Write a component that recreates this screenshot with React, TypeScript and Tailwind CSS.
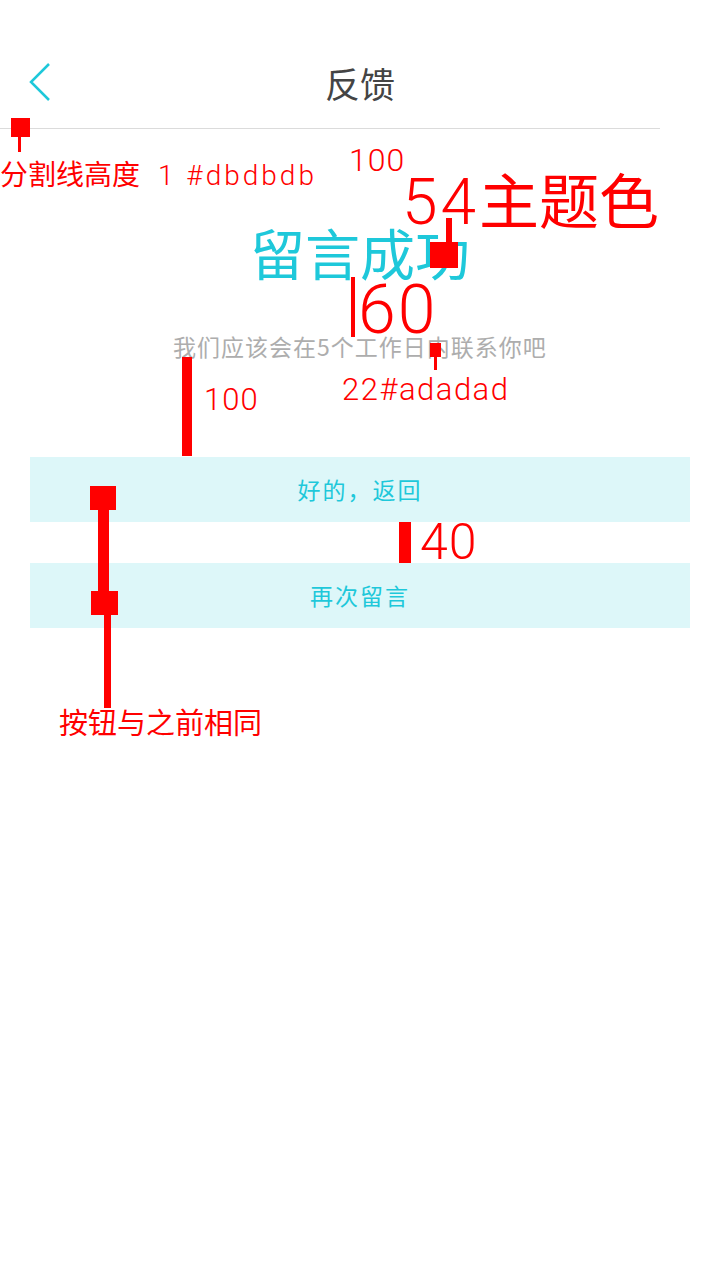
import type { ReactNode } from "react";

const cjk = "font-['Noto_Sans_CJK_SC','Noto_Sans',sans-serif]";
const latin = "font-['Roboto','Noto_Sans_CJK_SC',sans-serif] font-light";

function Note({ className, children }: { className: string; children: ReactNode }) {
  return <div className={`absolute whitespace-nowrap text-[#ff0000] ${className}`}>{children}</div>;
}

function Mark({ className }: { className: string }) {
  return <div className={`absolute bg-[#ff0000] ${className}`} />;
}

export default function App() {
  return (
    <div className={`relative h-[1280px] w-[720px] overflow-hidden bg-white ${cjk}`}>
      {/* header */}
      <header className="relative flex h-[128px] items-center justify-center pt-[36px]">
        <svg
          className="absolute left-[28px] top-[62px]"
          width="24"
          height="40"
          viewBox="0 0 24 40"
          fill="none"
          stroke="#1ec8da"
          strokeWidth="2.5"
        >
          <path d="M21 2 L3 20 L21 38" />
        </svg>
        <h1 className="text-[35px] leading-none text-[#444444]">反馈</h1>
      </header>
      <div className="h-px w-[660px] bg-[#dbdbdb]" />

      <main className="flex flex-col items-center">
        <h2 className="mt-[95px] text-[55px] leading-[54px] text-[#1ec8da]">留言成功</h2>
        <p className="mt-[57px] text-[23px] leading-[22px] tracking-[1px] text-[#adadad]">
          我们应该会在5个工作日内联系你吧
        </p>
        <div className="mt-[100px] flex w-full flex-col gap-[41px] px-[30px]">
          <button type="button" className="h-[65px] w-full bg-[#ddf7f9] text-[23px] tracking-[2px] text-[#1ec8da]">
            好的，返回
          </button>
          <button type="button" className="h-[65px] w-full bg-[#ddf7f9] text-[23px] tracking-[2px] text-[#1ec8da]">
            再次留言
          </button>
        </div>
      </main>

      {/* annotations */}
      <Mark className="left-[11px] top-[118px] h-[19px] w-[19px]" />
      <Mark className="left-[18px] top-[136px] h-[16px] w-[3px]" />
      <Note className="left-0 top-[155px] text-[28px] leading-[36px]">
        分割线高度<span className={`${latin} ml-[18px] tracking-[3px]`}>1 #dbdbdb</span>
      </Note>
      <Note className={`left-[349px] top-[143px] text-[32px] leading-[34px] tracking-[1px] ${latin}`}>100</Note>
      <Note className="left-[402px] top-[162px] text-[60px] leading-[72px]">
        <span className={`${latin} text-[64px] tracking-[3px]`}>54</span>主题色
      </Note>
      <Mark className="left-[446px] top-[218px] h-[26px] w-[6px]" />
      <Mark className="left-[430px] top-[242px] h-[26px] w-[28px]" />
      <Mark className="left-[351px] top-[277px] h-[60px] w-[4px]" />
      <Note className={`left-[358px] top-[274px] text-[68px] leading-[72px] tracking-[2px] ${latin}`}>60</Note>
      <Mark className="left-[430px] top-[343px] h-[14px] w-[11px]" />
      <Mark className="left-[434px] top-[355px] h-[15px] w-[3px]" />
      <Note className={`left-[342px] top-[372px] text-[31px] leading-[36px] tracking-[1.5px] ${latin}`}>22#adadad</Note>
      <Mark className="left-[182px] top-[357px] h-[99px] w-[10px]" />
      <Note className={`left-[204px] top-[382px] text-[31px] leading-[36px] tracking-[1px] ${latin}`}>100</Note>
      <Mark className="left-[399px] top-[522px] h-[41px] w-[12px]" />
      <Note className={`left-[420px] top-[515px] text-[50px] leading-[54px] tracking-[1px] ${latin}`}>40</Note>
      <Mark className="left-[90px] top-[486px] h-[24px] w-[26px]" />
      <Mark className="left-[98px] top-[508px] h-[84px] w-[11px]" />
      <Mark className="left-[91px] top-[591px] h-[24px] w-[27px]" />
      <Mark className="left-[104px] top-[613px] h-[95px] w-[7px]" />
      <Note className="left-[59px] top-[703px] text-[29px] leading-[36px]">按钮与之前相同</Note>
    </div>
  );
}
